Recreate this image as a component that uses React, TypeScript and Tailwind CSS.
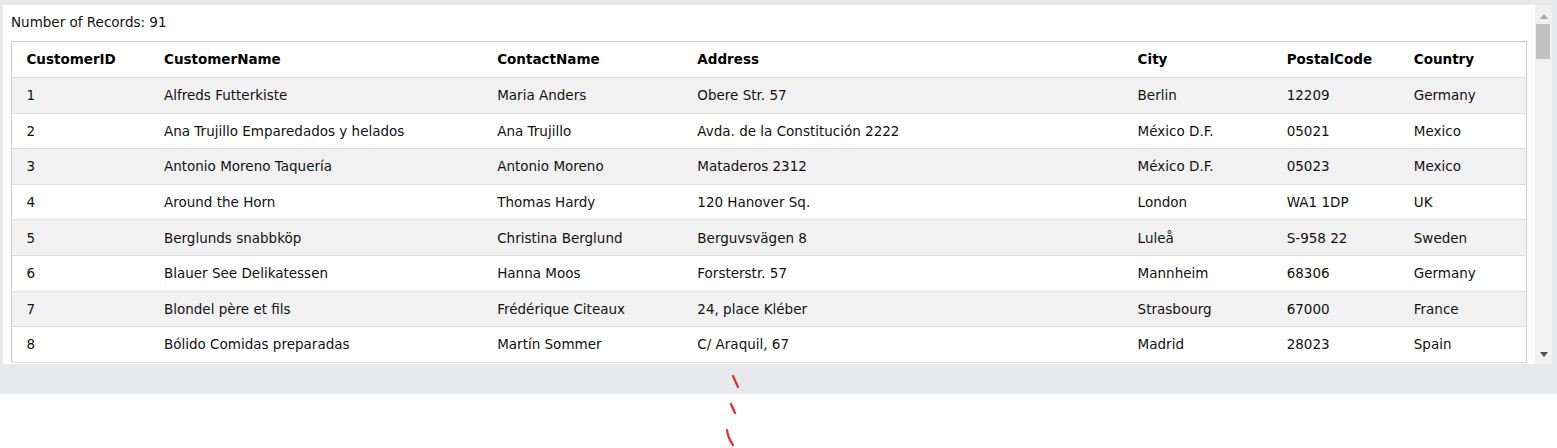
const columns = [
  "CustomerID",
  "CustomerName",
  "ContactName",
  "Address",
  "City",
  "PostalCode",
  "Country",
];

const rows = [
  ["1", "Alfreds Futterkiste", "Maria Anders", "Obere Str. 57", "Berlin", "12209", "Germany"],
  ["2", "Ana Trujillo Emparedados y helados", "Ana Trujillo", "Avda. de la Constitución 2222", "México D.F.", "05021", "Mexico"],
  ["3", "Antonio Moreno Taquería", "Antonio Moreno", "Mataderos 2312", "México D.F.", "05023", "Mexico"],
  ["4", "Around the Horn", "Thomas Hardy", "120 Hanover Sq.", "London", "WA1 1DP", "UK"],
  ["5", "Berglunds snabbköp", "Christina Berglund", "Berguvsvägen 8", "Luleå", "S-958 22", "Sweden"],
  ["6", "Blauer See Delikatessen", "Hanna Moos", "Forsterstr. 57", "Mannheim", "68306", "Germany"],
  ["7", "Blondel père et fils", "Frédérique Citeaux", "24, place Kléber", "Strasbourg", "67000", "France"],
  ["8", "Bólido Comidas preparadas", "Martín Sommer", "C/ Araquil, 67", "Madrid", "28023", "Spain"],
];

const colWidths = ["w-[138px]", "w-[333px]", "w-[200px]", "w-[440px]", "w-[149px]", "w-[127px]", "w-[127px]"];

function Scrollbar() {
  return (
    <div className="w-[17px] bg-[#f1f1f1] flex flex-col items-center">
      <svg width="8" height="5" viewBox="0 0 8 5" className="mt-[9px] mb-[5px]">
        <path d="M0 5 L4 0 L8 5 Z" fill="#a3a3a3" />
      </svg>
      <div className="w-[14px] h-[35px] bg-[#c1c1c1] mr-[1px]" />
      <div className="flex-1" />
      <svg width="8" height="5" viewBox="0 0 8 5" className="mb-[7px]">
        <path d="M0 0 L8 0 L4 5 Z" fill="#505050" />
      </svg>
    </div>
  );
}

export default function App() {
  return (
    <div className="w-[1557px] h-[448px] bg-white font-['DejaVu_Sans',Verdana,sans-serif] text-[13.5px] leading-[20.25px] text-[#111]">
      <div className="bg-[#e7e9eb] pt-[5px] pl-[3px] pr-[5px]">
        <div className="flex h-[359px]">
          <div className="flex-1 bg-white overflow-hidden px-[8px] pt-[7px]">
            <div className="mb-[9px]">Number of Records: 91</div>
            <table className="table-fixed border-collapse border border-[#cccccc] w-[1516px]">
              <colgroup>
                {colWidths.map((w, i) => (
                  <col key={i} className={w} />
                ))}
              </colgroup>
              <thead>
                <tr className="border-b border-[#dddddd]">
                  {columns.map((c) => (
                    <th
                      key={c}
                      className="text-left font-bold text-black pl-[14.4px] pr-[7.2px] py-[7.2px]"
                    >
                      {c}
                    </th>
                  ))}
                </tr>
              </thead>
              <tbody>
                {rows.map((r, i) => (
                  <tr
                    key={r[0]}
                    className={`border-b border-[#dddddd] ${i % 2 === 0 ? "bg-[#f1f1f1]" : "bg-white"}`}
                  >
                    {r.map((cell, j) => (
                      <td
                        key={j}
                        className="pl-[14.4px] pr-[7.2px] py-[7.2px] whitespace-nowrap"
                      >
                        {cell}
                      </td>
                    ))}
                  </tr>
                ))}
              </tbody>
            </table>
          </div>
          <Scrollbar />
        </div>
        <div className="h-[30px]" />
      </div>
      <div className="relative h-[54px]">
        <svg
          width="40"
          height="90"
          viewBox="0 0 40 90"
          className="absolute left-[710px] top-[-30px]"
        >
          <path d="M23 12 L28 23" stroke="#e52b2b" strokeWidth="2.2" strokeLinecap="round" fill="none" />
          <path d="M21 40 L25 49" stroke="#e52b2b" strokeWidth="2.2" strokeLinecap="round" fill="none" />
          <path d="M17 66 Q18 74 23 81" stroke="#e52b2b" strokeWidth="2.2" strokeLinecap="round" fill="none" />
        </svg>
      </div>
    </div>
  );
}
